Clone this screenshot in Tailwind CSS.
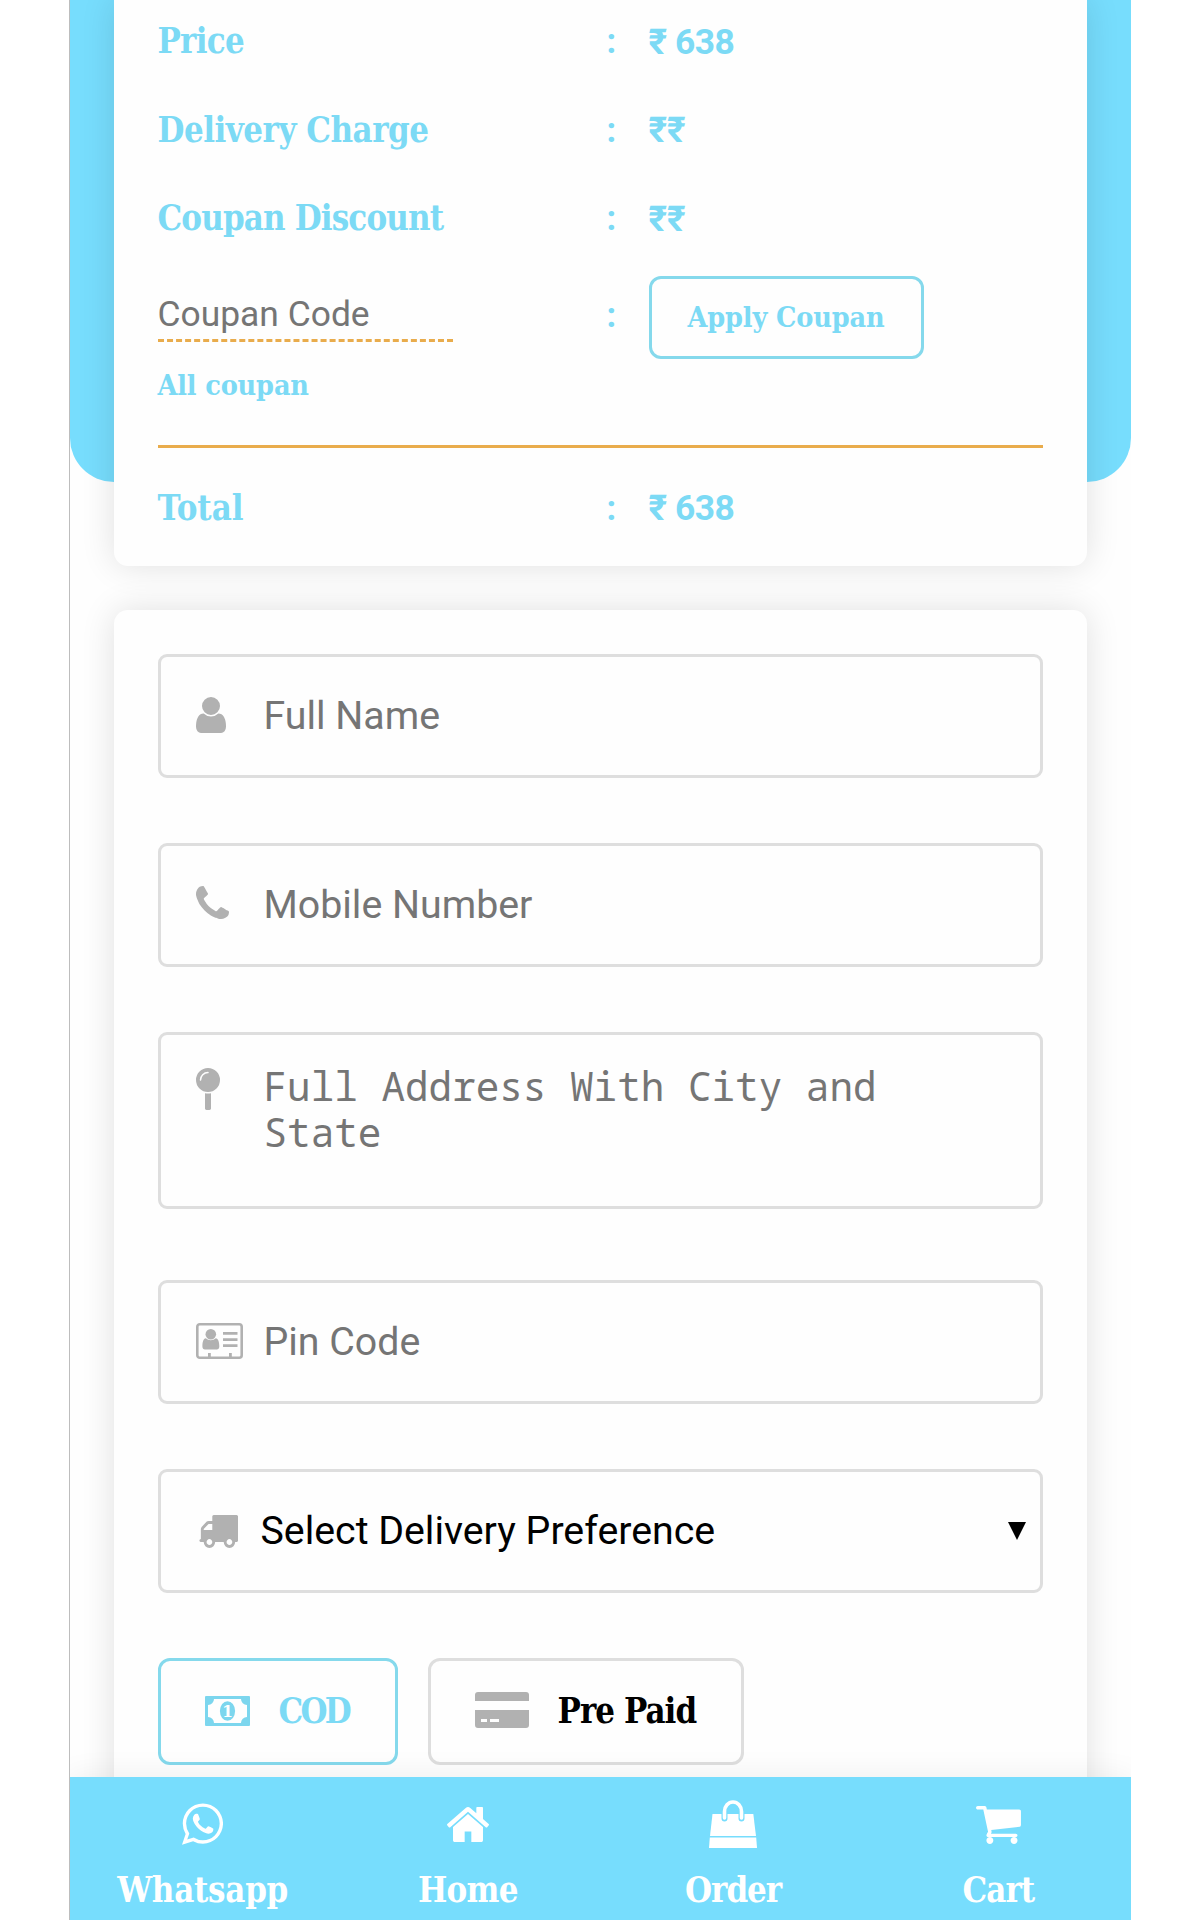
<!DOCTYPE html>
<html lang="en">
<head>
  <meta charset="UTF-8">
  <meta name="viewport" content="width=device-width, initial-scale=1.0">
  <title>Checkout</title>
  <script src="https://cdn.jsdelivr.net/npm/@tailwindcss/browser@4"></script>
</head>
<body class="bg-white">
  <div class="w-[1200px] h-[1920px] overflow-hidden bg-white pl-[69px] pr-[69px]">
    <div class="relative h-full overflow-hidden border-l border-[#bdbdbd] bg-[#fefefe] font-['Roboto',sans-serif]">

      <!-- header background -->
      <div class="absolute inset-x-0 top-0 h-[482px] rounded-b-[44px] bg-[#77ddfd]"></div>

      <main class="relative flex flex-col gap-[44px] pl-[43.5px] pr-[44px]">

        <!-- price summary -->
        <section class="h-[566px] rounded-b-[14px] bg-[#fefefe] px-[44px] shadow-[0_0_34px_rgba(0,0,0,0.12)] text-[#7cdaf5] text-[34.5px] font-bold font-['Roboto_Slab','DejaVu_Serif_Condensed','DejaVu_Serif',serif] tracking-[-0.75px]">
          <div class="-mt-[2px] flex h-[88.5px] items-center">
            <span class="w-[449px]">Price</span>
            <span class="w-[42px] font-['Roboto']">:</span>
            <span class="font-['Roboto'] text-[35.4px] tracking-[-0.5px]">₹ 638</span>
          </div>
          <div class="flex h-[88.5px] items-center">
            <span class="w-[449px] tracking-[-0.5px]">Delivery Charge</span>
            <span class="w-[42px] font-['Roboto']">:</span>
            <span class="font-['Roboto'] text-[35.4px] tracking-[0px]">₹₹</span>
          </div>
          <div class="flex h-[88.5px] items-center">
            <span class="w-[449px] tracking-[-0.85px]">Coupan Discount</span>
            <span class="w-[42px] font-['Roboto']">:</span>
            <span class="font-['Roboto'] text-[35.4px] tracking-[0px]">₹₹</span>
          </div>
          <div class="mt-[12px] flex h-[83px] items-center">
            <div class="w-[449px]">
              <div class="mb-[2px] w-[295px] h-[51px] border-b-3 border-dashed border-[#e9ac4c] font-['Roboto'] text-[35.4px] font-normal tracking-normal leading-[47px] text-[#757575]">Coupan Code</div>
            </div>
            <span class="w-[42px] pb-[2px] font-['Roboto']">:</span>
            <button class="h-[83px] w-[275px] rounded-[12px] border-3 border-[#85d9ec] text-[28.5px] font-bold tracking-[-0.15px]">Apply Coupan</button>
          </div>
          <div class="flex h-[54px] items-center text-[28.5px] tracking-[-0.15px]">All coupan</div>
          <hr class="mt-[32px] border-0 h-[3px] bg-[#e9ac4c]">
          <div class="mt-[17px] flex h-[88px] items-center">
            <span class="w-[449px] tracking-[0px]">Total</span>
            <span class="w-[42px] font-['Roboto']">:</span>
            <span class="font-['Roboto'] text-[35.4px] tracking-[-0.5px]">₹ 638</span>
          </div>
        </section>

        <!-- address form -->
        <form class="flex h-[1400px] flex-col rounded-[14px] bg-[#fefefe] px-[44px] pt-[44px] shadow-[0_0_34px_rgba(0,0,0,0.12)] text-[39.3px] text-[#757575]">
          <label class="flex h-[124px] items-center rounded-[9px] border-3 border-[#dedede] pl-[35px]">
            <svg class="mb-[2px] h-[36px] w-[30px] fill-[#b1b1b1]" viewBox="256 128 1280 1536"><path d="M1536 1399q0 109-62.5 187t-150.5 78h-854q-88 0-150.5-78t-62.5-187q0-85 8.5-160.5t31.5-152 58.5-131 94-89 134.5-34.5q131 128 313 128t313-128q76 0 134.5 34.5t94 89 58.5 131 31.5 152 8.5 160.5zm-256-887q0 159-112.5 271.5t-271.5 112.5-271.5-112.5-112.5-271.5 112.5-271.5 271.5-112.5 271.5 112.5 112.5 271.5z"/></svg>
            <span class="ml-[38px]">Full Name</span>
          </label>
          <label class="mt-[65px] flex h-[124px] items-center rounded-[9px] border-3 border-[#dedede] pl-[35px]">
            <svg class="mb-[6px] h-[33px] w-[33px] fill-[#b1b1b1]" viewBox="192 128 1408 1408"><path d="M1600 1240q0 27-10 70.5t-21 68.5q-21 50-122 106-94 51-186 51-27 0-53-3.5t-57.5-12.5-47-14.5-55.5-20.5-49-18q-98-35-175-83-127-79-264-216t-216-264q-48-77-83-175-3-9-18-49t-20.5-55.5-14.5-47-12.5-57.5-3.5-53q0-92 51-186 56-101 106-122 25-11 68.5-21t70.5-10q14 0 21 3 18 6 53 76 11 19 30 54t35 63.5 31 53.5q3 4 17.5 25t21.5 35.5 7 28.5q0 20-28.5 50t-62 55-62 53-28.5 46q0 9 5 22.5t8.5 20.5 14 24 11.5 19q76 137 174 235t235 174q2 1 19 11.5t24 14 20.5 8.5 22.5 5q18 0 46-28.5t53-62 55-62 50-28.5q14 0 28.5 7t35.5 21.5 25 17.5q25 15 53.5 31t63.5 35 54 30q70 35 76 53 3 7 3 21z"/></svg>
            <span class="ml-[35px]">Mobile Number</span>
          </label>
          <label class="mt-[65px] flex h-[177px] items-start rounded-[9px] border-3 border-[#dedede] pl-[35px]">
            <svg class="mt-[33px] h-[42px] w-[24px] fill-[#b1b1b1]" viewBox="384 0 1024 1792"><path d="M896 1088q66 0 128-15v655q0 26-19 45t-45 19h-128q-26 0-45-19t-19-45v-655q62 15 128 15zm0-1088q212 0 362 150t150 362-150 362-362 150-362-150-150-362 150-362 362-150zm0 224q14 0 23-9t9-23-9-23-23-9q-146 0-249 103t-103 249q0 14 9 23t23 9 23-9 9-23q0-119 84.5-203.5t203.5-84.5z"/></svg>
            <span class="ml-[44px] mt-[28px] w-[660px] font-['Noto_Sans_Mono','DejaVu_Sans_Mono',monospace] text-[39.3px] leading-[46px]">Full Address With City and State</span>
          </label>
          <label class="mt-[71px] flex h-[124px] items-center rounded-[9px] border-3 border-[#dedede] pl-[35px]">
            <svg class="mb-[2px] h-[36px] w-[47px] fill-[#b1b1b1]" viewBox="0 0 47 36">
              <rect x="1.3" y="1.3" width="44.4" height="33.4" rx="2.5" fill="none" stroke="#b1b1b1" stroke-width="2.600"/>
              <circle cx="14.8" cy="11.2" r="5.3"/>
              <path d="M9.8 15.2c1.400 1.300 3.100 2 5 2s3.600-.700 5-2c2.400.500 3.500 3.500 3.500 8.300 0 1.800-1 3-2.600 3H9c-1.600 0-2.600-1.200-2.600-3 0-4.800 1-7.800 3.400-8.300z"/>
              <path d="M27 9h14.500v2.800H27zM27 15.200h14.500V18H27zM27 21.200h14.500V24H27zM12 30h2.800v4H12zM33 30h2.800v4H33z"/>
            </svg>
            <span class="ml-[21px]">Pin Code</span>
          </label>
          <label class="mt-[65px] flex h-[124px] items-center rounded-[9px] border-3 border-[#dedede] pl-[37px] pr-[14px] text-black">
            <svg class="h-[33px] w-[40px] fill-[#b1b1b1]" viewBox="0 256 1792 1408" preserveAspectRatio="none"><path d="M640 1408q0-52-38-90t-90-38-90 38-38 90 38 90 90 38 90-38 38-90zm-384-512h384v-256h-158q-13 0-22 9l-195 195q-9 9-9 22v30zm1280 512q0-52-38-90t-90-38-90 38-38 90 38 90 90 38 90-38 38-90zm256-1088v1024q0 15-4 26.5t-13.5 18.5-16.5 11.5-23.5 6-22.5 2-25.5 0-22.5-.5q0 106-75 181t-181 75-181-75-75-181h-384q0 106-75 181t-181 75-181-75-75-181h-64q-3 0-22.5.5t-25.5 0-22.5-2-23.5-6-16.5-11.5-13.5-18.5-4-26.5q0-26 19-45t45-19v-320q0-8-.5-35t0-38 2.5-34.5 6.5-37 14-30.5 22.5-30l198-198q19-19 50.5-32t58.5-13h160v-192q0-26 19-45t45-19h1024q26 0 45 19t19 45z"/></svg>
            <span class="ml-[23px] flex-1">Select Delivery Preference</span>
            <svg class="h-[18px] w-[18px]" viewBox="0 0 18 18"><path d="M0 0h18L9 18z"/></svg>
          </label>

          <!-- payment method -->
          <div class="mt-[65px] flex gap-[30px] font-['Roboto_Slab','DejaVu_Serif_Condensed','DejaVu_Serif',serif] text-[34.5px] font-bold">
            <button type="button" class="flex h-[107px] w-[240px] items-center rounded-[12px] border-3 border-[#85d9ec] pl-[44px] text-[#7cdaf5]">
              <svg class="mb-[2px] h-[30px] w-[45px] fill-[#7cd6ee]" viewBox="0 0 45 30">
                <path fill-rule="evenodd" d="M1 0h43a1 1 0 0 1 1 1v28a1 1 0 0 1-1 1H1a1 1 0 0 1-1-1V1a1 1 0 0 1 1-1zM9 3a6 6 0 0 1-6 6v12a6 6 0 0 1 6 6h27a6 6 0 0 1 6-6V9a6 6 0 0 1-6-6z"/>
                <ellipse cx="22.500" cy="15" rx="7.600" ry="9.800"/>
                <text x="22.500" y="21" text-anchor="middle" letter-spacing="0" font-family="DejaVu Serif Condensed" font-weight="bold" font-size="17" fill="#fff">1</text>
              </svg>
              <span class="ml-[29px] tracking-[-2.7px]">COD</span>
            </button>
            <button type="button" class="flex h-[107px] w-[316px] items-center rounded-[12px] border-3 border-[#dedede] pl-[44px] text-black">
              <svg class="mb-[3px] h-[36px] w-[54px] fill-[#b1b1b1]" viewBox="0 0 54 36">
                <path d="M3 0h48a3 3 0 0 1 3 3v6H0V3a3 3 0 0 1 3-3z"/>
                <path fill-rule="evenodd" d="M0 18h54v15a3 3 0 0 1-3 3H3a3 3 0 0 1-3-3zM6 27v3h6v-3zM15 27v3h9v-3z"/>
              </svg>
              <span class="ml-[29px] tracking-[-0.95px]">Pre Paid</span>
            </button>
          </div>
        </form>
      </main>

      <!-- bottom navigation -->
      <nav class="absolute inset-x-0 bottom-0 grid h-[143px] grid-cols-4 bg-[#77ddfd] pt-[20px] text-center text-white shadow-[0_0_30px_rgba(0,0,0,0.07)] font-['Roboto_Slab','DejaVu_Serif_Condensed','DejaVu_Serif',serif] text-[34.5px] font-bold leading-[46px] tracking-[-0.7px]">
        <a class="flex flex-col items-center">
          <span class="flex h-[54px] items-center"><svg class="h-[42px] w-[41px] fill-white" viewBox="128 122 1535 1542"><path d="M1113 974q13 0 97.5 44t89.500 53q2 5 2 15 0 33-17 76-16 39-71 65.500t-102 26.500q-57 0-190-62-98-45-170-118t-148-185q-72-107-71-194v-8q3-91 74-158 24-22 52-22 6 0 18 1.500t19 1.500q19 0 26.500 6.500t15.500 27.500q8 20 33 88t25 75q0 21-34.500 57.500t-34.500 46.500q0 7 5 15 34 73 102 137 56 53 151 101 12 7 22 7 15 0 54-48.500t52-48.500zm-203 530q127 0 243.500-50t200.500-134 134-200.500 50-243.500-50-243.500-134-200.500-200.500-134-243.500-50-243.500 50-200.500 134-134 200.500-50 243.500q0 203 120 368l-79 233 242-77q158 104 345 104zm0-1382q153 0 292.500 60t240.500 161 161 240.500 60 292.500-60 292.500-161 240.500-240.500 161-292.500 60q-195 0-365-94l-417 134 136-405q-108-178-108-389 0-153 60-292.500t161-240.500 240.500-161 292.500-60z"/></svg></span>
          <span class="mt-[16px] tracking-[-0.25px]">Whatsapp</span>
        </a>
        <a class="flex flex-col items-center">
          <span class="flex h-[54px] items-center"><svg class="h-[35px] w-[42px] fill-white" viewBox="89 253 1614 1283" preserveAspectRatio="none"><path d="M1472 992v480q0 26-19 45t-45 19h-384v-384h-256v384h-384q-26 0-45-19t-19-45v-480q0-1 .5-3t.5-3l575-474 575 474q1 2 1 6zm223-69l-62 74q-8 9-21 11h-3q-13 0-21-7l-692-577-692 577q-12 8-24 7-13-2-21-11l-62-74q-8-10-7-23.500t11-21.500l719-599q32-26 76-26t76 26l244 204v-195q0-14 9-23t23-9h192q14 0 23 9t9 23v408l219 182q10 8 11 21.500t-7 23.500z"/></svg></span>
          <span class="mt-[16px]">Home</span>
        </a>
        <a class="flex flex-col items-center">
          <span class="flex h-[54px] items-center"><svg class="h-[48px] w-[48px] fill-white" viewBox="0 0 48 48">
            <path d="M3.500 14h40.800L47 36H1z"/>
            <path d="M.8 37.500h46.400L48 48H0z"/>
            <path d="M15.500 18.500v-7a8.500 9.500 0 0 1 17 0v7" fill="none" stroke="#77ddfd" stroke-width="6" stroke-linecap="round"/>
            <path d="M15.500 18v-6.500a8.500 9.500 0 0 1 17 0V18" fill="none" stroke="#fff" stroke-width="3.600" stroke-linecap="round"/>
          </svg></span>
          <span class="mt-[16px] tracking-[-1px]">Order</span>
        </a>
        <a class="flex flex-col items-center">
          <span class="flex h-[54px] items-center"><svg class="mt-[2px] h-[38px] w-[45px] fill-white" viewBox="64 256 1664 1408"><path d="M704 1536q0 52-38 90t-90 38-90-38-38-90 38-90 90-38 90 38 38 90zm896 0q0 52-38 90t-90 38-90-38-38-90 38-90 90-38 90 38 38 90zm128-1088v512q0 24-16.500 42.500t-40.500 21.500l-1044 122q13 60 13 70 0 16-24 64h920q26 0 45 19t19 45-19 45-45 19h-1024q-26 0-45-19t-19-45q0-11 8-31.500t16-36 21.500-40 15.500-29.500l-177-823h-204q-26 0-45-19t-19-45 19-45 45-19h256q16 0 28.500 6.500t19.500 15.500 13 24.500 8 26 5.500 29.500 4.500 26h1201q26 0 45 19t19 45z"/></svg></span>
          <span class="mt-[16px] tracking-[-1px]">Cart</span>
        </a>
      </nav>
    </div>
  </div>
</body>
</html>
